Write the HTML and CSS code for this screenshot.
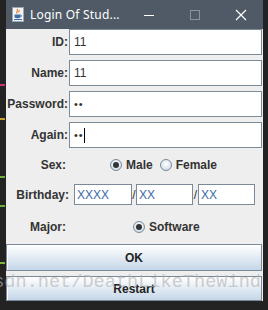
FILE: index.html
```html
<!DOCTYPE html>
<html>
<head>
<meta charset="utf-8">
<link rel="stylesheet" href="styles.css">
</head>
<body>
<div class="desk">
  <div class="code">
    <span class="c1"></span><span class="c2"></span><span class="c3"></span><span class="c4"></span><span class="c5"></span>
  </div>
  <div class="window">
    <div class="titlebar">
      <svg class="appicon" width="12" height="15" viewBox="0 0 12 15">
        <rect x="0.5" y="0.5" width="11" height="14" fill="#f4f4f4" stroke="#9aa6b3"/>
        <path d="M5 2c2 1.5-1.5 2.5 0 4.5M7 3c1 1-1 1.5 0 2.5" stroke="#e2752b" stroke-width="1.1" fill="none"/>
        <path d="M2.5 7.5h6v2.3c0 1-1 1.4-2 1.4H4.5c-1 0-2-.4-2-1.4z" fill="#3f6fa6"/>
        <path d="M8.5 8c1.3 0 1.3 1.8 0 1.8" stroke="#3f6fa6" fill="none"/>
        <path d="M2 12.5h8" stroke="#3f6fa6"/>
      </svg>
      <span class="title">Login Of Stud...</span>
      <div class="controls">
        <svg class="ctl" width="46" height="28" viewBox="0 0 46 28"><path d="M18 14.5h10" stroke="#fff" stroke-width="1"/></svg>
        <svg class="ctl" width="46" height="28" viewBox="0 0 46 28"><rect x="18.5" y="9.5" width="9" height="9" fill="none" stroke="#8a939c"/></svg>
        <svg class="ctl" width="46" height="28" viewBox="0 0 46 28"><path d="M18 9l10 10M28 9l-10 10" stroke="#fff" stroke-width="1.2"/></svg>
      </div>
    </div>
    <div class="content">
      <div class="row field-row">
        <label class="lbl">ID:</label>
        <div class="input">11</div>
      </div>
      <div class="row field-row">
        <label class="lbl">Name:</label>
        <div class="input">11</div>
      </div>
      <div class="row field-row">
        <label class="lbl">Password:</label>
        <div class="input dots">••</div>
      </div>
      <div class="row field-row">
        <label class="lbl">Again:</label>
        <div class="input dots">••<span class="caret"></span></div>
      </div>
      <div class="row radio-row">
        <label class="lbl2">Sex:</label>
        <div class="radios">
          <span class="radio on"></span><span class="rtext">Male</span>
          <span class="radio"></span><span class="rtext">Female</span>
        </div>
      </div>
      <div class="row bday-row">
        <label class="lbl2 bday">Birthday:</label>
        <div class="dates">
          <div class="small-input w1">XXXX</div><span class="slash">/</span>
          <div class="small-input w2">XX</div><span class="slash s2">/</span>
          <div class="small-input w3">XX</div>
        </div>
      </div>
      <div class="row major-row">
        <label class="lbl2">Major:</label>
        <div class="major">
          <span class="radio on"></span><span class="rtext">Software</span>
        </div>
      </div>
      <div class="btn ok">OK</div>
      <div class="btn restart">Restart</div>
    </div>
  </div>
  <div class="watermark">csdn.net/DeathLikeTheWind</div>
</div>
</body>
</html>
```
FILE: styles.css
```css
* { box-sizing: border-box; }
html, body { margin: 0; padding: 0; }
body {
  width: 268px;
  height: 310px;
  background: #232323;
  overflow: hidden;
  font-family: "Liberation Sans", Arial, sans-serif;
}
.desk {
  position: relative;
  width: 268px;
  height: 310px;
  display: flex;
  align-items: flex-start;
}
.code {
  width: 6px;
  height: 310px;
  position: relative;
  flex: none;
}
.code span { position: absolute; left: 0; width: 5px; height: 2px; }
.code .c1 { top: 84px; background: #cc3377; }
.code .c2 { top: 118px; background: #c8a030; }
.code .c3 { top: 176px; background: #6fae3c; }
.code .c4 { top: 205px; background: #6fae3c; }
.code .c5 { top: 262px; background: #7fb640; }
.window {
  width: 257px;
  height: 301px;
  background: #eeeeee;
  display: flex;
  flex-direction: column;
  overflow: hidden;
}
.titlebar {
  height: 29px;
  background: #4f5a66;
  display: flex;
  align-items: center;
  flex: none;
}
.appicon { margin-left: 6px; margin-right: 6px; }
.title {
  color: #ffffff;
  font-family: "Noto Sans", "Open Sans", sans-serif;
  font-size: 12px;
  flex: 1;
  white-space: nowrap;
  letter-spacing: 0.2px;
}
.controls { display: flex; margin-right: -1px; }
.ctl { display: block; }
.content {
  display: flex;
  flex-direction: column;
  padding: 0 1px 0 0;
}
.row { display: flex; align-items: center; }
.field-row { height: 26px; }
.field-row + .field-row { margin-top: 5px; }
.lbl {
  width: 63px;
  text-align: right;
  font-weight: bold;
  font-size: 12px;
  color: #333333;
  padding-right: 1px;
  white-space: nowrap;
}
.input {
  width: 193px;
  height: 26px;
  border: 1px solid #7a8a99;
  box-shadow: inset 1px 1px 0 #ffffff;
  background: #ffffff;
  font-size: 12px;
  color: #333333;
  padding-left: 4px;
  display: flex;
  align-items: center;
}
.dots { letter-spacing: 1px; font-size: 11px; }
.caret {
  display: inline-block;
  width: 1px;
  height: 15px;
  background: #000;
  margin-left: 0px;
}
.lbl2 {
  width: 60px;
  text-align: right;
  font-weight: bold;
  font-size: 12px;
  color: #333333;
  white-space: nowrap;
}
.radio-row { height: 26px; margin-top: 4px; }
.radios { display: flex; align-items: center; margin-left: 44px; }
.radio {
  width: 12px;
  height: 12px;
  border-radius: 50%;
  border: 1px solid #7a8a99;
  background: radial-gradient(circle at 50% 40%, #ffffff 0%, #dde6ef 60%, #b8c9da 100%);
  display: inline-flex;
  align-items: center;
  justify-content: center;
  margin-right: 4px;
}
.radio.on::after {
  content: "";
  width: 6px;
  height: 6px;
  border-radius: 50%;
  background: #333333;
}
.rtext {
  font-weight: bold;
  font-size: 12px;
  color: #333333;
  margin-right: 7px;
}
.bday-row { height: 21px; margin-top: 6px; }
.bday { width: 63px; font-weight: bold; }
.dates { display: flex; align-items: center; margin-left: 5px; }
.small-input {
  height: 21px;
  border: 1px solid #7a8a99;
  background: #ffffff;
  font-size: 12px;
  color: #3d6aa8;
  padding-left: 2px;
  display: flex;
  align-items: center;
}
.w1 { width: 58px; }
.w2 { width: 57px; }
.w3 { width: 57px; }
.slash { width: 4px; font-size: 12px; color: #333; text-align: center; }
.slash.s2 { width: 5px; }
.major-row { height: 24px; margin-top: 10px; }
.major { display: flex; align-items: center; margin-left: 67px; }
.btn {
  border: 1px solid #7a8a99;
  background: linear-gradient(to bottom, #ffffff 0%, #eef3f8 30%, #c4d6e8 100%);
  font-weight: bold;
  font-size: 12px;
  color: #222222;
  display: flex;
  align-items: center;
  justify-content: center;
  box-shadow: inset 1px 1px 0 #ffffff;
}
.ok { margin-top: 5px; height: 27px; }
.restart { margin-top: 5px; height: 25px; }
.watermark {
  position: absolute;
  left: -18px;
  top: 272px;
  font-family: "Liberation Mono", "DejaVu Sans Mono", monospace;
  font-size: 18.6px;
  color: rgba(180, 180, 180, 0.65);
  white-space: nowrap;
  pointer-events: none;
}
```
